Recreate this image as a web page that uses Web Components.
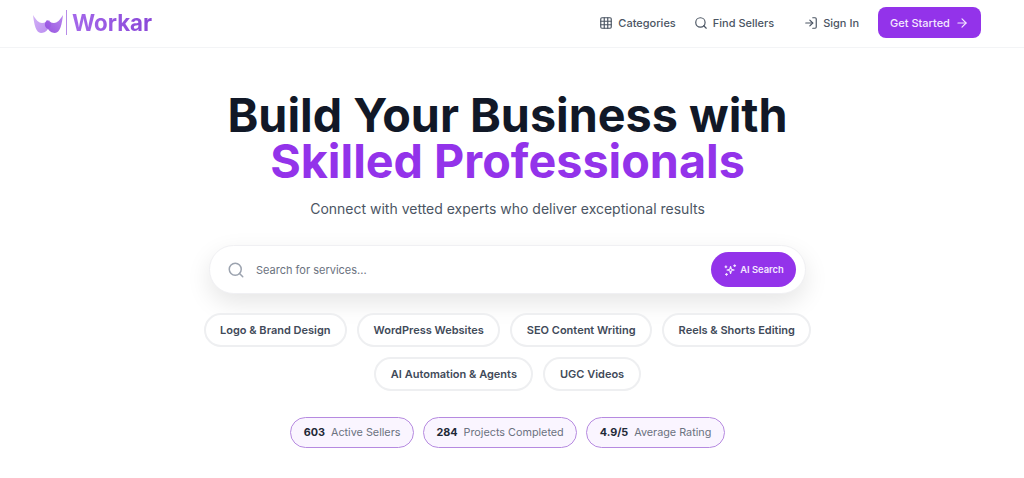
<!DOCTYPE html>
<html>
<head>
<meta charset="utf-8">
<title>Workar</title>
<style>
  html, body { margin: 0; padding: 0; background: #fff; }
  body { font-family: Inter, "Liberation Sans", sans-serif; width: 1024px; height: 478px; overflow: hidden; }
</style>
</head>
<body>
<site-header></site-header>
<hero-section></hero-section>

<script>
const ICONS = {
  grid: '<rect x="3" y="3" width="18" height="18" rx="2"/><path d="M3 9h18M3 15h18M9 3v18M15 3v18"/>',
  search: '<circle cx="11" cy="11" r="8"/><path d="m21 21-4.3-4.3"/>',
  login: '<path d="M15 3h4a2 2 0 0 1 2 2v14a2 2 0 0 1-2 2h-4"/><path d="m10 17 5-5-5-5"/><path d="M15 12H3"/>',
  arrow: '<path d="M5 12h14"/><path d="m12 5 7 7-7 7"/>',
  sparkles: '<path d="M13 6 11.6 10.6 7 12l4.6 1.4L13 18l1.4-4.6L19 12l-4.6-1.4Z"/><path d="M5 5v3M3.5 6.500h3M20 3v3M18.500 4.500h3M6 18v3M4.500 19.500h3"/>'
};

function icon(name, size) {
  return `<svg width="${size}" height="${size}" viewBox="0 0 24 24" fill="none" stroke="currentColor" stroke-width="2" stroke-linecap="round" stroke-linejoin="round">${ICONS[name]}</svg>`;
}

class SiteHeader extends HTMLElement {
  constructor() {
    super();
    this.attachShadow({ mode: "open" });
  }
  connectedCallback() {
    this.shadowRoot.innerHTML = `
    <style>
      :host { display: flex; align-items: center; justify-content: space-between; height: 45px; padding: 0 43px 2px 33px; border-bottom: 1px solid #f3f4f6; background: #fff; }
      .logo { display: flex; align-items: center; }
      .mark { display: block; margin-top: 3px; }
      .bar { width: 1px; height: 25px; background: #b78be8; margin: 0 5px 0 3px; }
      .word { font-size: 22.300px; font-weight: 700; background: linear-gradient(90deg, #a468ea, #8a48d8); -webkit-background-clip: text; background-clip: text; color: transparent; }
      nav { display: flex; align-items: center; }
      a { display: flex; align-items: center; gap: 5px; font-size: 11px; font-weight: 500; color: #4b5563; }
      .cat { margin-right: 18px; }
      .find { margin-right: 30px; }
      .sign { margin-right: 19px; }
      .cta { height: 31px; width: 103px; box-sizing: border-box; justify-content: center; border-radius: 8px; background: #9333ea; color: #f3e8ff; }
    </style>
    <div class="logo">
      <svg class="mark" width="30" height="19" viewBox="0 0 30 19">
        <defs>
          <linearGradient id="wl" x1="0" y1="0" x2="1" y2="1"><stop offset="0" stop-color="#d3b3f6"/><stop offset="1" stop-color="#b98af0"/></linearGradient>
          <linearGradient id="wr" x1="1" y1="0" x2="0" y2="1"><stop offset="0" stop-color="#b27cec"/><stop offset="1" stop-color="#8e45dd"/></linearGradient>
        </defs>
        <path d="M0 0 C3 5 6 8 9 8 C12 8 14 6 16 5 C19 8 19 12 15 14 C13 17 10 18 8 18 C3 18 1 9 0 0Z" fill="url(#wl)"/>
        <path d="M30 0 C27 5 24 8 21 8 C18 8 16 6 14 5 C11 8 11 12 15 14 C17 17 20 18 22 18 C27 18 29 9 30 0Z" fill="url(#wr)" opacity="0.92"/>
      </svg>
      <span class="bar"></span>
      <span class="word">Workar</span>
    </div>
    <nav>
      <a class="cat">${icon("grid", 14)}Categories</a>
      <a class="find">${icon("search", 14)}Find Sellers</a>
      <a class="sign">${icon("login", 14)}Sign In</a>
      <a class="cta">Get Started ${icon("arrow", 14)}</a>
    </nav>`;
  }
}

class SearchBar extends HTMLElement {
  constructor() {
    super();
    this.attachShadow({ mode: "open" });
  }
  connectedCallback() {
    this.shadowRoot.innerHTML = `
    <style>
      :host { display: flex; align-items: center; box-sizing: border-box; width: 597px; height: 49px; padding: 0 9px 0 17px; border: 1px solid #f0f0f3; border-radius: 25px; background: #fff; box-shadow: 0 9px 24px rgba(0,0,0,0.1); }
      .glass { display: flex; color: #9ca3af; margin-right: 11px; }
      .text { flex: 1; font-size: 11px; color: #6b7280; }
      button { display: flex; align-items: center; justify-content: center; gap: 3px; width: 85px; height: 35px; padding: 0; border: 0; border-radius: 18px; background: #9333ea; color: #f3e8ff; font: 600 9.400px Inter, sans-serif; }
    </style>
    <span class="glass">${icon("search", 18)}</span>
    <span class="text">Search for services...</span>
    <button>${icon("sparkles", 14)}AI Search</button>`;
  }
}

class TagChip extends HTMLElement {
  constructor() {
    super();
    this.attachShadow({ mode: "open" });
  }
  connectedCallback() {
    this.shadowRoot.innerHTML = `
    <style>
      :host { display: flex; align-items: center; box-sizing: border-box; height: 34px; padding: 0 14.500px; border: 2px solid #eeeff1; border-radius: 17px; background: #fff; font-size: 11px; font-weight: 600; color: #414a59; white-space: nowrap; }
    </style>
    <slot></slot>`;
  }
}

class StatPill extends HTMLElement {
  constructor() {
    super();
    this.attachShadow({ mode: "open" });
  }
  connectedCallback() {
    this.shadowRoot.innerHTML = `
    <style>
      :host { display: flex; align-items: center; gap: 6px; box-sizing: border-box; height: 31px; padding: 0 12.500px; border: 1px solid #b68ae0; border-radius: 16px; background: #faf5ff; font-size: 10.800px; color: #6b7280; white-space: nowrap; }
      b { font-weight: 700; color: #1f2937; }
    </style>
    <b>${this.getAttribute("value")}</b><slot></slot>`;
  }
}

class HeroSection extends HTMLElement {
  constructor() {
    super();
    this.attachShadow({ mode: "open" });
  }
  connectedCallback() {
    this.shadowRoot.innerHTML = `
    <style>
      :host { display: flex; flex-direction: column; align-items: center; width: 1015px; padding-top: 44px; }
      h1 { margin: 0; font-size: 46.700px; line-height: 46px; font-weight: 700; color: #111827; text-align: center; white-space: nowrap; }
      h1 span { display: block; color: #9333ea; }
      p { margin: 15px 0 26px; font-size: 14px; line-height: 20px; color: #4b5563; }
      .row { display: flex; justify-content: center; gap: 10px; }
      .tags { margin-top: 19px; }
      .tags + .row { margin-top: 10px; }
      .stats { margin-top: 26px; gap: 9px; }
    </style>
    <h1>Build Your Business with <span>Skilled Professionals</span></h1>
    <p>Connect with vetted experts who deliver exceptional results</p>
    <search-bar></search-bar>
    <div class="row tags">
      <tag-chip>Logo &amp; Brand Design</tag-chip>
      <tag-chip>WordPress Websites</tag-chip>
      <tag-chip>SEO Content Writing</tag-chip>
      <tag-chip>Reels &amp; Shorts Editing</tag-chip>
    </div>
    <div class="row">
      <tag-chip>AI Automation &amp; Agents</tag-chip>
      <tag-chip>UGC Videos</tag-chip>
    </div>
    <div class="row stats">
      <stat-pill value="603">Active Sellers</stat-pill>
      <stat-pill value="284">Projects Completed</stat-pill>
      <stat-pill value="4.9/5">Average Rating</stat-pill>
    </div>`;
  }
}

customElements.define("site-header", SiteHeader);
customElements.define("search-bar", SearchBar);
customElements.define("tag-chip", TagChip);
customElements.define("stat-pill", StatPill);
customElements.define("hero-section", HeroSection);
</script>
</body>
</html>
